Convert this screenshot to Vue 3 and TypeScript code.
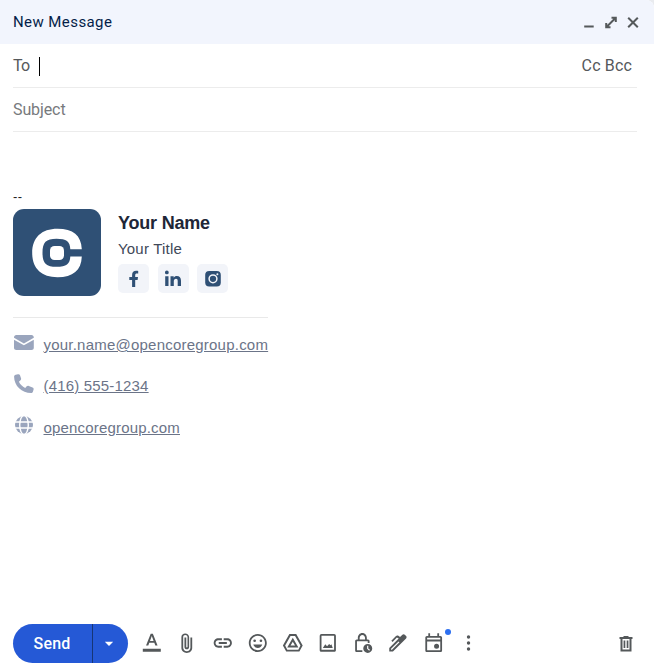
<script setup lang="ts">
interface Tool {
  name: string
  path: string
  dot?: boolean
}

const tools: Tool[] = [
  { name: 'Formatting', path: 'M2 18.400h20v3.400H2zM5.600 14.700h2.500l1.100-2.900h5.600l1.100 2.900h2.500L13.200 1.800h-2.400zM10 9.800l2-5.500 2 5.500z' },
  { name: 'Attach', path: 'M18 6v11.500c0 3.200-2.700 5.500-6 5.500s-6-2.400-6-5.500V5.300C6 3 8 1.400 10.200 1.400s4.400 1.700 4.400 3.900v11.100c0 1.500-1.200 2.600-2.600 2.600s-2.600-1.100-2.600-2.600V6h2v10.200c0 .5.300.8.700.8s.7-.3.7-.8V5.300c0-1.200-1.100-2.100-2.500-2.100S8 4.200 8 5.400v12c0 2.100 1.800 3.800 4 3.800s4-1.700 4-3.800V6z' },
  { name: 'Link', path: 'M3.900 12c0-1.700 1.400-3.100 3.100-3.100h4V6.800H7c-2.800 0-5.100 2.300-5.100 5.200s2.300 5.200 5.100 5.200h4v-2.100H7c-1.700 0-3.100-1.400-3.100-3.100zM7.500 13.100h9v-2.200h-9zM17 6.800h-4v2.100h4c1.700 0 3.100 1.400 3.100 3.100s-1.400 3.100-3.100 3.100h-4v2.100h4c2.800 0 5.100-2.300 5.100-5.200S19.800 6.800 17 6.800z' },
  { name: 'Emoji', path: 'M12 2C6.500 2 2 6.500 2 12s4.500 10 10 10 10-4.500 10-10S17.500 2 12 2zm0 18c-4.400 0-8-3.600-8-8s3.600-8 8-8 8 3.600 8 8-3.600 8-8 8zM8.500 11a1.500 1.500 0 1 0 0-3 1.500 1.500 0 0 0 0 3zm7 0a1.500 1.500 0 1 0 0-3 1.500 1.500 0 0 0 0 3zM7 13.700c.7 2.200 2.600 3.800 5 3.800s4.300-1.600 5-3.800z' },
  { name: 'Drive', path: 'M8.200 2h7.600L23 14.700 19.300 21.500H4.700L1 14.700zM9.500 4.100 3.500 14.700l2.400 4.700h12.200l2.400-4.700-6-10.600zM12 6.200l6.200 10.800H5.800zm0 4.500-2.500 4.200h5z' },
  { name: 'Image', path: 'M19 4v15.500H5V4h14m0-2H5a2 2 0 0 0-2 2v16c0 1 1 1.800 2 1.800h14c1 0 2-.8 2-1.800V4a2 2 0 0 0-2-2zM6.500 17.500l2.700-4 2 2 2.300-2.500 1.500 1.500 1-1 1.500 4z' },
  { name: 'Confidential', path: 'M6.500 8V6.500C6.500 3.400 8.600 1 11.500 1s5 2.400 5 5.500V8h1.300c1 0 1.700.8 1.700 1.800V12h-2v-2H5.500v10h6v2H5.300c-1 0-1.800-.8-1.800-1.800V9.800c0-1 .8-1.800 1.800-1.800zm2 0h6V6.500c0-2-1.200-3.500-3-3.500s-3 1.500-3 3.500zm9 5a5 5 0 1 1 0 10 5 5 0 0 1 0-10zm-.7 2v3.500l2.300 2 .9-.9-1.900-1.600v-3z' },
  { name: 'Signature', path: 'M2.500 21.500v-4L13 7l-2-1-4.800 4.800-1.400-1.400L10 4.200c.8-.8 1.800-.8 2.700-.2l1.800 1.400 2.600-2.600c.8-.8 1.900-.8 2.700 0l1.400 1.400c.8.800.8 1.900 0 2.700L6.600 21.500zm2-2h1l8.300-8.300-1-1-8.300 8.300z' },
  { name: 'Schedule', path: 'M7 1.200h2v3h8v-3h2v3h1.500c1 0 1.800.8 1.800 1.800v14.200c0 1-.8 1.800-1.800 1.800h-15c-1 0-1.800-.8-1.800-1.800V6c0-1 .8-1.800 1.800-1.800H7zM5.700 6.200v2h14.600v-2zm0 4V20h14.600v-9.800zM16.200 12.700a2.800 2.800 0 1 1 0 5.600 2.800 2.800 0 0 1 0-5.600z', dot: true },
  { name: 'More', path: 'M11.700 3.500a1.900 1.900 0 1 1 0 3.800 1.900 1.900 0 0 1 0-3.800zm0 6.600a1.900 1.900 0 1 1 0 3.800 1.900 1.900 0 0 1 0-3.800zm0 6.600a1.900 1.900 0 1 1 0 3.800 1.900 1.900 0 0 1 0-3.800z' },
]
</script>

<template>
  <main class="compose">
    <header class="header">
      <span class="heading">New Message</span>
      <div class="window-controls">
        <svg viewBox="0 0 14 14"><path d="M2.200 11.500h9.500" /></svg>
        <svg viewBox="0 0 14 14"><path d="M7.500 2.700h4.300V7M6.500 12.300H2.200V8M11.500 3l-9 9" /></svg>
        <svg viewBox="0 0 14 14"><path d="m2.200 2.700 9.600 9.600m0-9.600-9.600 9.600" /></svg>
      </div>
    </header>

    <div class="field">
      <span class="to">To</span><span class="caret"></span>
      <span class="copies">Cc Bcc</span>
    </div>
    <div class="field subject">Subject</div>

    <section class="message">
      <div class="dashes">--</div>
      <div class="profile">
        <svg class="logo" viewBox="0 0 88 87">
          <rect width="88" height="87" rx="11" fill="#2f5075" />
          <path d="M68.800 40.200H57.300C57 32.500 53.500 29.800 43.500 29.800c-10.500 0-14 3.500-14 14s3.500 14 14 14c10 0 13.500-2.700 13.800-10.300h11.500C68.300 61.500 60 68.200 44.500 68.200 28.500 68.200 19.200 59.500 19.200 44S28.500 19.700 44.500 19.700c15.500 0 23.800 6.500 24.300 20.500Z" fill="#fff" />
          <rect x="37" y="37" width="14" height="14" rx="4.500" fill="#fff" />
        </svg>
        <div class="person">
          <div class="name">Your Name</div>
          <div class="title">Your Title</div>
          <div class="socials">
            <span class="social"><svg viewBox="0 0 20 20"><path d="M8.100 18V11H5.300V8h2.800V5.900c0-2.700 1.600-4.100 4-4.100.9 0 1.600.1 2.100.2v2.600h-1.400c-1.100 0-1.600.6-1.600 1.600V8H14l-.4 3h-2.400v7z" /></svg></span>
            <span class="social"><svg viewBox="0 0 20 20"><path d="M2.200 7.300h3.300V17H2.200zM3.850 1.500a1.900 1.900 0 1 1 0 3.800 1.900 1.900 0 0 1 0-3.800zM7.500 7.300h3.200v1.400c.7-1.100 1.700-1.700 3.100-1.700 2.800 0 4.200 1.700 4.200 4.700V17h-3.300v-4.900c0-1.500-.5-2.300-1.700-2.300-1.400 0-2.200.9-2.200 2.500V17H7.500z" /></svg></span>
            <span class="social"><svg viewBox="0 0 20 20"><rect x="2.200" y="2" width="15.600" height="15.600" rx="4" /><circle cx="10" cy="9.800" r="3.900" fill="none" stroke="#f2f4f9" stroke-width="1.500" /><circle cx="14.400" cy="5.300" r="1" fill="#f2f4f9" /></svg></span>
          </div>
        </div>
      </div>

      <div class="contacts">
        <div class="contact">
          <svg viewBox="0 0 22 20"><path d="M1 4.300C1 3 2 2 3.300 2h15.200c1.300 0 2.300 1 2.300 2.300v.5l-9.900 5.700L1 4.800zm0 2.400 9.900 5.500 9.900-5.500v8c0 1.300-1 2.300-2.300 2.300H3.300C2 17 1 16 1 14.700z" /></svg>
          <a>your.name@opencoregroup.com</a>
        </div>
        <div class="contact phone">
          <svg viewBox="0 0 22 20"><path d="M2.700.8 5 .2c1-.2 1.700.2 2 1.100l1 3c.3.800.1 1.500-.5 2L5.900 7.700c1.300 2.700 3.500 4.900 6.300 6.200l1.500-1.600c.6-.6 1.300-.8 2.100-.4l3.700 1.500c.9.400 1.300 1.100 1.100 2l-.7 2.400c-.3.800-.9 1.200-1.800 1.200C8.900 19 1.100 11.900 1.100 2.800c0-1 .6-1.700 1.600-2Z" /></svg>
          <a>(416) 555-1234</a>
        </div>
        <div class="contact site">
          <svg viewBox="0 0 22 20"><circle cx="11" cy="9" r="9" /><g fill="none" stroke="#fff" stroke-width="1.400"><ellipse cx="11" cy="9" rx="4.300" ry="9.500" /><path d="M1 6h20M1 12h20" /></g></svg>
          <a>opencoregroup.com</a>
        </div>
      </div>
    </section>

    <footer class="toolbar">
      <div class="send">
        <span class="send-label">Send</span>
        <span class="send-more"><svg viewBox="0 0 10 6"><path d="M.8.8h8.400L5 5z" /></svg></span>
      </div>
      <div class="tools">
        <span v-for="tool in tools" :key="tool.name" class="tool">
          <svg viewBox="0 0 24 24"><path :d="tool.path" fill-rule="evenodd" /></svg>
          <i v-if="tool.dot" class="notice"></i>
        </span>
      </div>
      <svg class="trash" viewBox="0 0 16 20"><path d="M5.500 3V2h5v1h4v2h-1v12.500h-11V5h-1V3zM4.500 5v10.500h7V5zM5.600 6.500h1.700v7.500H5.600zm3.100 0h1.700v7.500H8.700z" fill-rule="evenodd" /></svg>
    </footer>
  </main>
</template>

<style>
body { background: #e9ebef; }
</style>

<style scoped>
.compose {
  box-sizing: border-box;
  width: 654px;
  height: 670px;
  display: flex;
  flex-direction: column;
  overflow: hidden;
  background: #fff;
  border-radius: 0 8px 0 0;
  font-family: "Liberation Sans", Arial, sans-serif;
}
.header {
  height: 44px;
  flex: none;
  box-sizing: border-box;
  padding: 0 14px 0 13px;
  display: flex;
  align-items: center;
  justify-content: space-between;
  background: #f2f5fd;
}
.heading {
  font: 400 15px/20px Roboto, sans-serif;
  letter-spacing: .42px;
  color: #041e49;
}
.window-controls { display: flex; gap: 8px; }
.window-controls svg { width: 14px; height: 14px; fill: none; stroke: #55595b; stroke-width: 2; }
.field {
  height: 44px;
  flex: none;
  box-sizing: border-box;
  margin: 0 17px 0 13px;
  border-bottom: 1px solid #ececec;
  display: flex;
  align-items: center;
  font: 16px/20px Roboto, sans-serif;
  color: #55585b;
}
.to { letter-spacing: -.8px; }
.subject { color: #777a7d; letter-spacing: -.1px; }
.caret { width: 1px; height: 19px; margin: 1px 0 0 10px; background: #000; }
.copies { margin-left: auto; padding-right: 5px; letter-spacing: .15px; }
.message { flex: 1; padding: 57px 13px 0; }
.dashes { height: 20px; font-size: 13px; line-height: 16px; letter-spacing: .3px; color: #222; }
.profile { display: flex; gap: 17px; }
.logo { width: 88px; height: 87px; display: block; }
.name { padding-top: 3px; font-weight: 700; font-size: 18px; line-height: 22px; letter-spacing: -.2px; color: #202637; }
.title { padding-top: 5px; font-size: 15px; line-height: 20px; letter-spacing: .2px; color: #404858; }
.socials { display: flex; gap: 8.500px; margin-top: 5px; }
.social { width: 31px; height: 29px; display: flex; align-items: center; justify-content: center; border-radius: 5px; background: #f2f4f9; }
.social svg { width: 20px; height: 20px; fill: #2f5075; }
.contacts { width: 255px; margin-top: 21px; border-top: 1px solid #e9e9e9; padding-top: 15px; display: flex; flex-direction: column; gap: 19px; }
.contact { height: 22px; display: flex; gap: 8.500px; }
.site { margin-top: 1px; }
.contact svg { width: 22px; height: 20px; flex: none; fill: #9aa5bd; }
.contact a { padding-top: 2px; font-size: 15px; line-height: 20px; letter-spacing: .22px; color: #6b7488; text-decoration: underline; white-space: nowrap; }
.phone a, .site a { letter-spacing: .18px; }
.toolbar { height: 46px; flex: none; box-sizing: border-box; padding: 0 20px 7px 13px; display: flex; align-items: center; }
.send { width: 115px; height: 39px; display: flex; overflow: hidden; border-radius: 20px; background: #2559d6; color: #fff; }
.send-label { width: 80px; box-sizing: border-box; border-right: 1px solid #163675; padding-right: 1px; text-align: center; font: 500 16px/39px Roboto, sans-serif; letter-spacing: .2px; }
.send-more { flex: 1; display: flex; align-items: center; padding-left: 11px; }
.send-more svg { width: 10px; height: 6px; fill: #fff; }
.tools { display: flex; margin: -1px 0 0 6.500px; }
.tool { position: relative; width: 35.150px; height: 22px; display: flex; justify-content: center; }
.tool svg { width: 21.600px; height: 22px; fill: #54585a; }
.notice { position: absolute; right: 0; top: -3px; width: 6px; height: 6px; border-radius: 50%; background: #2c6ff0; }
.trash { width: 16px; height: 20px; margin-left: auto; fill: #54585a; }
</style>
